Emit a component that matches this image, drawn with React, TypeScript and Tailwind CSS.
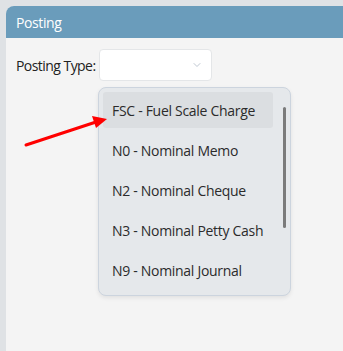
import { ChevronDown } from "lucide-react"

const options = [
  "FSC - Fuel Scale Charge",
  "N0 - Nominal Memo",
  "N2 - Nominal Cheque",
  "N3 - Nominal Petty Cash",
  "N9 - Nominal Journal",
]

export default function App() {
  return (
    <div
      className="w-[343px] h-[351px] overflow-hidden bg-[#dfe2e5] pl-[6px] pt-[6px]"
      style={{ fontFamily: '"Open Sans", "Noto Sans", sans-serif' }}
    >
      <div className="relative w-[360px] h-[360px] rounded-tl-[8px] overflow-hidden bg-[#f4f4f4]">
        <div className="h-[32px] bg-[#6a9cbb] pl-[10px] flex items-center text-[14px] tracking-[-0.4px] text-white">
          Posting
        </div>

        <div className="pl-[10px] pt-[11px] flex items-center">
          <span className="w-[83px] whitespace-nowrap text-[14px] tracking-[-0.55px] text-[#222]">Posting Type:</span>
          <div className="w-[113px] h-[32px] bg-white rounded-[4px] border border-[#e4e6e8] flex items-center justify-end pr-[8px]">
            <ChevronDown className="w-[12px] h-[12px] text-[#a9b4c2]" strokeWidth={1.5} />
          </div>
        </div>

        <div className="ml-[92px] mt-[6px] w-[193px] h-[209px] rounded-[8px] bg-[#e5e8eb] border border-[#ccd4de] shadow-[0_2px_4px_rgba(0,0,0,0.08)] relative pt-[4px] pl-[4px]">
          {options.map((o, i) => (
            <div
              key={o}
              className={
                "w-[170px] h-[36px] mb-[4px] rounded-[3px] pl-[9px] flex items-center text-[14px] tracking-[-0.3px] text-[#2b2b2b] " +
                (i === 0 ? "bg-[#dbdee1]" : "")
              }
            >
              {o}
            </div>
          ))}
          <div className="absolute left-[184px] top-[19px] w-[3px] h-[121px] rounded-full bg-[#7b7b7b]" />
        </div>

        <svg className="absolute left-[-6px] top-[-6px]" width="343" height="351">
          <line x1="26" y1="145" x2="96" y2="122" stroke="#ff0000" strokeWidth="3" strokeLinecap="round" />
          <polygon points="107,119 92,116 96,128" fill="#ff0000" />
        </svg>
      </div>
    </div>
  )
}
